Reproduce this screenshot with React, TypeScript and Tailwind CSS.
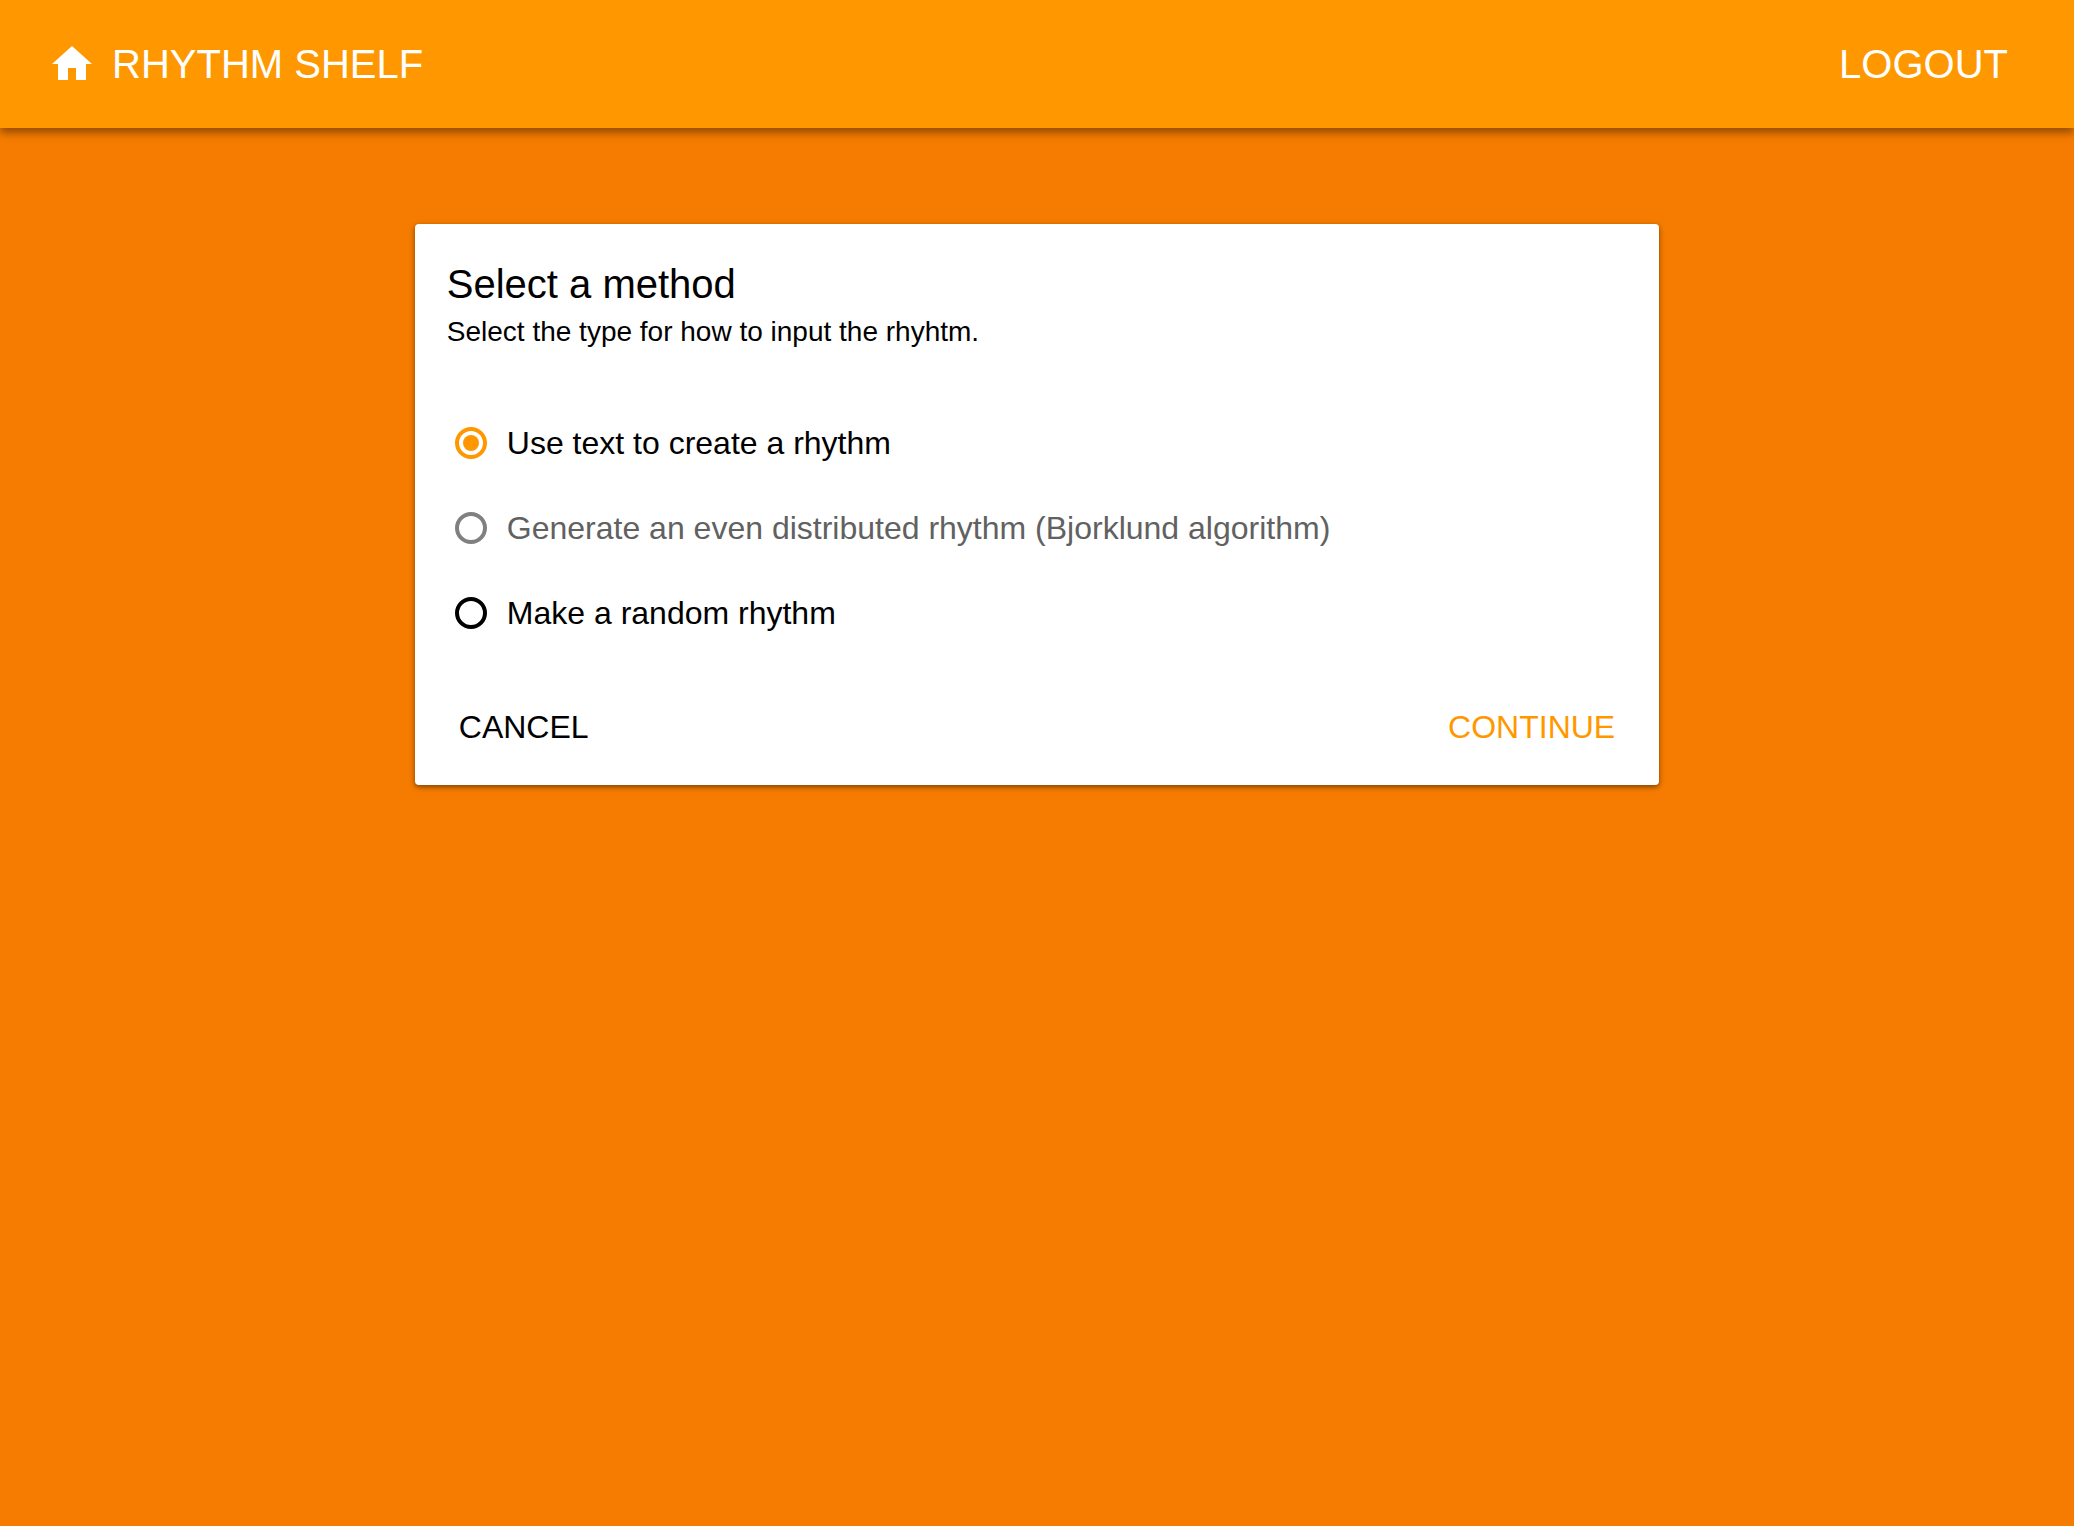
import { useState } from "react";

const methods = [
  { id: "text", label: "Use text to create a rhythm", disabled: false },
  { id: "even", label: "Generate an even distributed rhythm (Bjorklund algorithm)", disabled: true },
  { id: "random", label: "Make a random rhythm", disabled: false },
];

export default function App() {
  const [method, setMethod] = useState("text");
  return (
    <div className="flex min-h-screen flex-col bg-[#f57c00] font-['Liberation_Sans',Arial,sans-serif] text-black">
      <header className="flex h-32 items-center justify-between bg-[#ff9800] pr-[66px] pl-12 text-white shadow-[0_5px_8px_0_rgba(0,0,0,0.38)]">
        <a href="#home" className="flex items-center gap-4 text-[40px] leading-12">
          <svg viewBox="0 0 24 24" className="size-12" fill="currentColor" aria-hidden="true">
            <path d="M10 20v-6h4v6h5v-8h3L12 3 2 12h3v8z" />
          </svg>
          RHYTHM SHELF
        </a>
        <button type="button" className="text-[40px] leading-12">LOGOUT</button>
      </header>
      <main className="mx-auto mt-24 w-3/5 rounded-[4px] bg-white p-8 shadow-[0_2px_6px_0_rgba(0,0,0,0.26),0_2px_4px_0_rgba(0,0,0,0.26)]">
        <form onSubmit={(e) => e.preventDefault()}>
          <h1 className="text-[40px] leading-14">Select a method</h1>
          <p className="text-[28px] leading-10">Select the type for how to input the rhyhtm.</p>
          <fieldset className="mt-12">
            {methods.map((m) => (
              <label key={m.id} className={m.disabled ? "flex h-[85px] items-center gap-5 pl-2 text-[32px] text-[#616161]" : "flex h-[85px] items-center gap-5 pl-2 text-[32px]"}>
                <input
                  type="radio"
                  name="method"
                  checked={method === m.id}
                  disabled={m.disabled}
                  onChange={() => setMethod(m.id)}
                  className="size-8 appearance-none rounded-full border-4 border-black bg-clip-content p-1 checked:border-[#ff9800] checked:bg-[#ff9800] disabled:border-[#808080]"
                />
                {m.label}
              </label>
            ))}
          </fieldset>
          <div className="mt-[46px] flex justify-between px-3 text-[32px] leading-[52px]">
            <button type="button">CANCEL</button>
            <button type="submit" className="text-[#ff9800]">CONTINUE</button>
          </div>
        </form>
      </main>
    </div>
  );
}
